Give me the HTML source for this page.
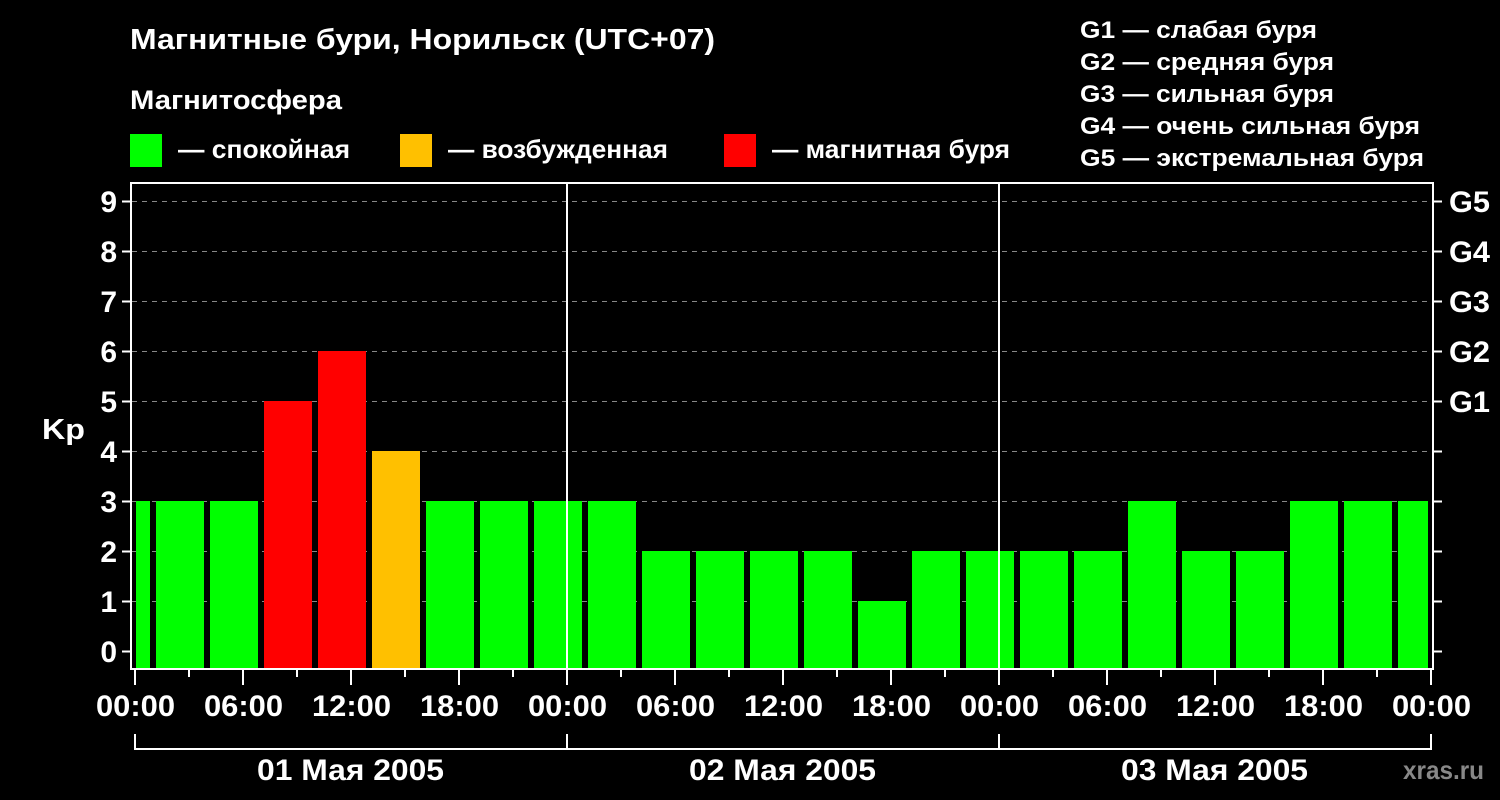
<!DOCTYPE html>
<html><head><meta charset="utf-8"><style>
html,body{margin:0;padding:0;background:#000;}
svg{display:block;font-family:"Liberation Sans",sans-serif;font-weight:bold;}
</style></head><body>
<svg width="1500" height="800" viewBox="0 0 1500 800">
<rect width="1500" height="800" fill="#000"/>
<g fill="#fff" lengthAdjust="spacingAndGlyphs">
<text x="130" y="49" font-size="29" textLength="585" lengthAdjust="spacingAndGlyphs">Магнитные бури, Норильск (UTC+07)</text>
<text x="130" y="109" font-size="27" textLength="212" lengthAdjust="spacingAndGlyphs">Магнитосфера</text>
<text x="178" y="158" font-size="26" textLength="172" lengthAdjust="spacingAndGlyphs">— спокойная</text>
<text x="448" y="158" font-size="26" textLength="220" lengthAdjust="spacingAndGlyphs">— возбужденная</text>
<text x="772" y="158" font-size="26" textLength="238" lengthAdjust="spacingAndGlyphs">— магнитная буря</text>
<g font-size="24">
<text x="1080" y="38" textLength="237" lengthAdjust="spacingAndGlyphs">G1 — слабая буря</text>
<text x="1080" y="70" textLength="254" lengthAdjust="spacingAndGlyphs">G2 — средняя буря</text>
<text x="1080" y="102" textLength="254" lengthAdjust="spacingAndGlyphs">G3 — сильная буря</text>
<text x="1080" y="134" textLength="340" lengthAdjust="spacingAndGlyphs">G4 — очень сильная буря</text>
<text x="1080" y="166" textLength="344" lengthAdjust="spacingAndGlyphs">G5 — экстремальная буря</text>
</g>
</g>
<rect x="130" y="134" width="32" height="33" fill="#00ff00"/>
<rect x="400" y="134" width="32" height="33" fill="#ffc000"/>
<rect x="724" y="134" width="32" height="33" fill="#ff0000"/>

<g stroke="#888" stroke-width="1" stroke-dasharray="5,5">
<line x1="132" x2="1432" y1="201.5" y2="201.5"/>
<line x1="132" x2="1432" y1="251.5" y2="251.5"/>
<line x1="132" x2="1432" y1="301.5" y2="301.5"/>
<line x1="132" x2="1432" y1="351.5" y2="351.5"/>
<line x1="132" x2="1432" y1="401.5" y2="401.5"/>
<line x1="132" x2="1432" y1="451.5" y2="451.5"/>
<line x1="132" x2="1432" y1="501.5" y2="501.5"/>
<line x1="132" x2="1432" y1="551.5" y2="551.5"/>
<line x1="132" x2="1432" y1="601.5" y2="601.5"/>
</g>

<g>
<rect x="136" y="501" width="14" height="167" fill="#00ff00"/>
<rect x="156" y="501" width="48" height="167" fill="#00ff00"/>
<rect x="210" y="501" width="48" height="167" fill="#00ff00"/>
<rect x="264" y="401" width="48" height="267" fill="#ff0000"/>
<rect x="318" y="351" width="48" height="317" fill="#ff0000"/>
<rect x="372" y="451" width="48" height="217" fill="#ffc000"/>
<rect x="426" y="501" width="48" height="167" fill="#00ff00"/>
<rect x="480" y="501" width="48" height="167" fill="#00ff00"/>
<rect x="534" y="501" width="48" height="167" fill="#00ff00"/>
<rect x="588" y="501" width="48" height="167" fill="#00ff00"/>
<rect x="642" y="551" width="48" height="117" fill="#00ff00"/>
<rect x="696" y="551" width="48" height="117" fill="#00ff00"/>
<rect x="750" y="551" width="48" height="117" fill="#00ff00"/>
<rect x="804" y="551" width="48" height="117" fill="#00ff00"/>
<rect x="858" y="601" width="48" height="67" fill="#00ff00"/>
<rect x="912" y="551" width="48" height="117" fill="#00ff00"/>
<rect x="966" y="551" width="48" height="117" fill="#00ff00"/>
<rect x="1020" y="551" width="48" height="117" fill="#00ff00"/>
<rect x="1074" y="551" width="48" height="117" fill="#00ff00"/>
<rect x="1128" y="501" width="48" height="167" fill="#00ff00"/>
<rect x="1182" y="551" width="48" height="117" fill="#00ff00"/>
<rect x="1236" y="551" width="48" height="117" fill="#00ff00"/>
<rect x="1290" y="501" width="48" height="167" fill="#00ff00"/>
<rect x="1344" y="501" width="48" height="167" fill="#00ff00"/>
<rect x="1398" y="501" width="30" height="167" fill="#00ff00"/>
</g>

<g stroke="#fff" stroke-width="2" fill="none">
<rect x="131" y="183" width="1302" height="486"/>
<line x1="567" x2="567" y1="183" y2="669"/>
<line x1="999" x2="999" y1="183" y2="669"/>
<path d="M122 201.5H131M122 251.5H131M122 301.5H131M122 351.5H131M122 401.5H131M122 451.5H131M122 501.5H131M122 551.5H131M122 601.5H131M122 651.5H131"/>
<path d="M1433 201.5H1442M1433 251.5H1442M1433 301.5H1442M1433 351.5H1442M1433 401.5H1442M1433 451.5H1442M1433 501.5H1442M1433 551.5H1442M1433 601.5H1442M1433 651.5H1442"/>
<path d="M135 670V685M189 670V677M243 670V685M297 670V677M351 670V685M405 670V677M459 670V685M513 670V677M567 670V685M621 670V677M675 670V685M729 670V677M783 670V685M837 670V677M891 670V685M945 670V677M999 670V685M1053 670V677M1107 670V685M1161 670V677M1215 670V685M1269 670V677M1323 670V685M1377 670V677M1431 670V685"/>
<path d="M135 734V749H1431V734M567 734V749M999 734V749"/>
</g>

<g fill="#fff" font-size="30" text-anchor="end">
<text x="117" y="212">9</text><text x="117" y="262">8</text><text x="117" y="312">7</text>
<text x="117" y="362">6</text><text x="117" y="412">5</text><text x="117" y="462">4</text>
<text x="117" y="512">3</text><text x="117" y="562">2</text><text x="117" y="612">1</text>
<text x="117" y="662">0</text>
</g>
<text x="42" y="439" fill="#fff" font-size="29" textLength="43" lengthAdjust="spacingAndGlyphs">Kp</text>
<g fill="#fff" font-size="30">
<text x="1449" y="212" textLength="41" lengthAdjust="spacingAndGlyphs">G5</text>
<text x="1449" y="262" textLength="41" lengthAdjust="spacingAndGlyphs">G4</text>
<text x="1449" y="312" textLength="41" lengthAdjust="spacingAndGlyphs">G3</text>
<text x="1449" y="362" textLength="41" lengthAdjust="spacingAndGlyphs">G2</text>
<text x="1449" y="412" textLength="41" lengthAdjust="spacingAndGlyphs">G1</text>
</g>
<g fill="#fff" font-size="30">
<text x="96" y="716" textLength="79" lengthAdjust="spacingAndGlyphs">00:00</text>
<text x="204" y="716" textLength="79" lengthAdjust="spacingAndGlyphs">06:00</text>
<text x="312" y="716" textLength="79" lengthAdjust="spacingAndGlyphs">12:00</text>
<text x="420" y="716" textLength="79" lengthAdjust="spacingAndGlyphs">18:00</text>
<text x="528" y="716" textLength="79" lengthAdjust="spacingAndGlyphs">00:00</text>
<text x="636" y="716" textLength="79" lengthAdjust="spacingAndGlyphs">06:00</text>
<text x="744" y="716" textLength="79" lengthAdjust="spacingAndGlyphs">12:00</text>
<text x="852" y="716" textLength="79" lengthAdjust="spacingAndGlyphs">18:00</text>
<text x="960" y="716" textLength="79" lengthAdjust="spacingAndGlyphs">00:00</text>
<text x="1068" y="716" textLength="79" lengthAdjust="spacingAndGlyphs">06:00</text>
<text x="1176" y="716" textLength="79" lengthAdjust="spacingAndGlyphs">12:00</text>
<text x="1284" y="716" textLength="79" lengthAdjust="spacingAndGlyphs">18:00</text>
<text x="1392" y="716" textLength="79" lengthAdjust="spacingAndGlyphs">00:00</text>
<text x="257" y="780" textLength="187" lengthAdjust="spacingAndGlyphs">01 Мая 2005</text>
<text x="689" y="780" textLength="187" lengthAdjust="spacingAndGlyphs">02 Мая 2005</text>
<text x="1121" y="780" textLength="187" lengthAdjust="spacingAndGlyphs">03 Мая 2005</text>
</g>
<text x="1403" y="779" fill="#888" font-size="26" textLength="81" lengthAdjust="spacingAndGlyphs">xras.ru</text>
</svg>
</body></html>
